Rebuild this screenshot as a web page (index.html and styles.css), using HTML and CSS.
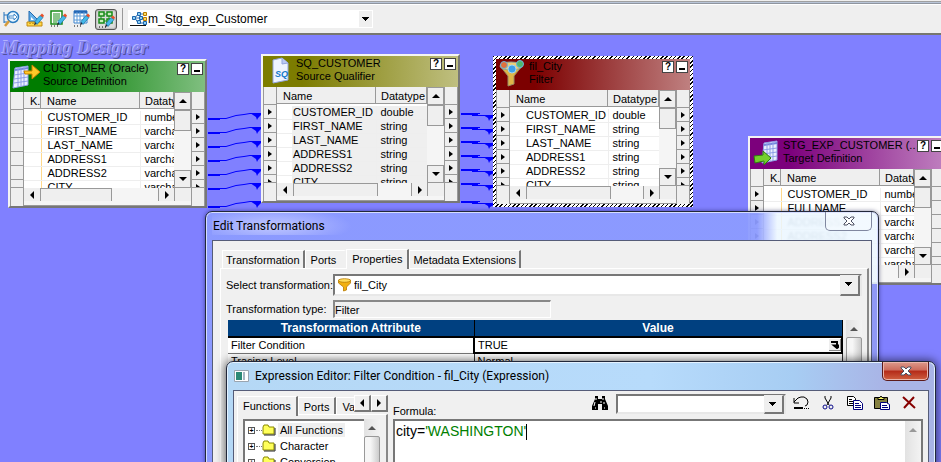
FILE: index.html
```html
<!DOCTYPE html>
<html lang="en">
<head>
<meta charset="utf-8">
<title>Mapping Designer</title>
<link rel="stylesheet" href="styles.css">
</head>
<body>
<svg class="defs" aria-hidden="true">
  <symbol id="pencil" viewBox="0 0 10 12"><path d="M0 12l1-4 2 2z" fill="#223"/><path d="M1 8l5-6 3 2-6 7z" fill="#45b8e8" stroke="#1673a8" stroke-width=".7"/><path d="M6 2l2-2 2 2-1 2z" fill="#e8502a"/></symbol>
  <symbol id="grid" viewBox="0 0 18 24"><path d="M3 3l13-2v19L1 23z" fill="#e9efff" stroke="#8d9ee6"/><path d="M3 5l13-2" stroke="#7385dd" stroke-width="2"/><path d="M2 10l14-2M2 14l14-2M2 18l14-2M6 3v19M9 3v18M12 2v19" stroke="#8d9ee6" fill="none"/></symbol>
  <symbol id="close" viewBox="0 0 12 10"><path d="M1 1h3l2 2 2-2h3v1L8 5l3 3v1H8L6 7 4 9H1V8l3-3-3-3z" fill="#fff" stroke="#4c5062"/></symbol>
  <symbol id="funnel" viewBox="0 0 14 14"><path d="M1 2v3l5 4v4l3-1V9l4-4V2z" fill="#f2b111" stroke="#b87a00" stroke-width=".8"/><ellipse cx="7" cy="2.5" rx="6" ry="1.8" fill="#ffdd5c" stroke="#b87a00" stroke-width=".8"/></symbol>
  <symbol id="folder" viewBox="0 0 14 12"><path d="M1 3l1-2h4l1 2h5v7H1z" fill="#ffff5a" stroke="#8a8a00"/><path d="M2 11h11V4" stroke="#222" fill="none"/></symbol>
</svg>

<header class="topbar">
  <div class="edge"></div>
  <div class="toolbar">
    <button class="tool" aria-label="Source Analyzer"><svg width="18" height="18" viewBox="0 0 18 18"><path d="M1 2v11M1 5h4M1 12h3" stroke="#2273bd" fill="none"/><circle cx="10" cy="7" r="5.5" fill="#e8f6ff" stroke="#2b7cc0" stroke-width="1.5"/><path d="M6 6h5V4l3 3-3 3V8H6z" fill="#fff" stroke="#2273bd" stroke-width=".8"/><path d="M6 11l-4 5" stroke="#d59b3a" stroke-width="2.5"/></svg></button>
    <button class="tool" aria-label="Target Designer"><svg width="18" height="18" viewBox="0 0 18 18"><path d="M3 1v11h11z" fill="#62aee8" stroke="#2069ae"/><path d="M5 7v3h3z" fill="#fff"/><path d="M1 12h15v4H1z" fill="#ffd849" stroke="#c28a10"/><path d="M4 13v1M7 13v1M10 13v1" stroke="#9a6b00"/><use href="#pencil" x="8" y="3" width="10" height="13"/></svg></button>
    <button class="tool" aria-label="Transformation Developer"><svg width="18" height="18" viewBox="0 0 18 18"><path d="M2 1h11v13H2z" fill="#fff" stroke="#178a17" stroke-width="1.5"/><path d="M4 4h7M4 6h7M4 8h7M4 10h6M4 12h4" stroke="#178a17"/><path d="M2 16h1M5 16h1M8 16h1" stroke="#000"/><use href="#pencil" x="8" y="3" width="10" height="13"/></svg></button>
    <button class="tool" aria-label="Mapplet Designer"><svg width="18" height="18" viewBox="0 0 18 18"><path d="M2 1h13v12H2z" fill="#fff" stroke="#3d83ce"/><path d="M2 2h13" stroke="#2467b5" stroke-width="3"/><path d="M2 6h13M2 10h13M5 2v11M8 2v11M12 2v11" stroke="#5b9ad8" fill="none"/><path d="M2 16h1M5 16h1M8 16h1" stroke="#000"/><use href="#pencil" x="8" y="3" width="10" height="13"/></svg></button>
    <button class="tool pressed" aria-label="Mapping Designer"><svg width="18" height="18" viewBox="0 0 18 18"><path d="M5 3h8M5 10h8M4 3v8M12 3v8" stroke="#178a17"/><path d="M2 1h5v4H2zM10 1h5v4h-5zM2 8h5v4H2zM10 8h5v4h-5z" fill="#c9f0bd" stroke="#178a17" stroke-width="1.5"/><path d="M2 16h1M5 16h1M8 16h1" stroke="#000"/><use href="#pencil" x="8" y="4" width="10" height="13"/></svg></button>
    <span class="rule"></span>
    <label class="picker"><svg width="18" height="16" viewBox="0 0 18 16"><path d="M0 14.500h16" stroke="#111"/><path d="M4 7h9M8 3l-3 4 3 5M8 3h7M8 12h7" stroke="#2a6fb0" fill="none"/><g fill="#8fd0f5" stroke="#1d66ae"><path d="M2.500 5.500h3v3h-3zM7.500 1.500h3v3h-3zM7.500 9.500h3v3h-3zM9.500 5.500h3v3h-3zM13.500 10.500h3v3h-3z"/></g><path d="M13.500 1.500h3v3h-3zM13.500 6.500h3v3h-3z" fill="#ffdb5b" stroke="#b87a00"/></svg><select aria-label="Mapping"><option>m_Stg_exp_Customer</option></select></label>
  </div>
</header>

<main class="canvas">
  <h1 class="watermark">Mapping Designer</h1>

  <svg class="links" width="700" height="180" viewBox="0 35 700 180" aria-hidden="true">
    <defs>
      <g id="la"><path d="M208 118.500h18l10-3 8-1 6-1h12" fill="none" stroke="#00f"/><path d="M208 119h12" stroke="#00f" stroke-width="2"/><path d="M250 113h11v2l-3 3-1 2-1-3z" fill="#00f"/></g>
      <g id="lb"><path d="M461 114h17" stroke="#00f" stroke-width="2"/><path d="M472 115.500h22M474 113.500h6" stroke="#00f" fill="none"/><path d="M483 115h11v2l-4 2-1 2-1-3z" fill="#00f"/></g>
    </defs>
    <use href="#la"/><use href="#la" y="14"/><use href="#la" y="28"/><use href="#la" y="42"/><use href="#la" y="56"/><use href="#la" y="70"/><use href="#la" y="88"/>
    <use href="#lb"/><use href="#lb" y="14"/><use href="#lb" y="28"/><use href="#lb" y="42"/><use href="#lb" y="56"/><use href="#lb" y="70"/><use href="#lb" y="88"/>
  </svg>

  <section class="node source keyed">
    <header class="bar"><svg width="29" height="27" viewBox="0 0 29 27"><use href="#grid" x="0" y="3" width="18" height="24"/><path d="M12 9h8V3l8 7-8 7v-5h-7z" fill="#ffc928" stroke="#c98200"/></svg><h2>CUSTOMER (Oracle)<br>Source Definition</h2><button>?</button><button class="min" aria-label="Minimize"></button></header>
    <div class="body">
      <div class="ports"><i></i><i></i><i></i><i></i><i></i><i></i><i></i><i></i></div>
      <div class="view"><table><thead><tr><th>K.</th><th>Name</th><th>Datatype</th></tr></thead><tbody><tr><td></td><td>CUSTOMER_ID</td><td>number</td></tr><tr><td></td><td>FIRST_NAME</td><td>varchar2</td></tr><tr><td></td><td>LAST_NAME</td><td>varchar2</td></tr><tr><td></td><td>ADDRESS1</td><td>varchar2</td></tr><tr><td></td><td>ADDRESS2</td><td>varchar2</td></tr><tr><td></td><td>CITY</td><td>varchar2</td></tr></tbody></table></div>
      <div class="vbar"><span class="up"></span><span class="thumb"></span><span class="down"></span></div>
      <div class="ports on"><i></i><i></i><i></i><i></i><i></i><i></i><i></i><i></i></div>
      <div class="hbar"><span class="left"></span><span class="thumb"></span><span class="right"></span><span class="corner"></span></div>
    </div>
  </section>

  <section class="node qualifier">
    <header class="bar"><svg width="29" height="27" viewBox="0 0 29 27"><path d="M8 3l9-2 6 5v17L8 26z" fill="#eef4ff" stroke="#93a5dd"/><path d="M17 1v6l6-1" fill="#b9c8f5" stroke="#93a5dd"/><text x="10" y="20" class="sq">SQ</text></svg><h2>SQ_CUSTOMER<br>Source Qualifier</h2><button>?</button><button class="min" aria-label="Minimize"></button></header>
    <div class="body">
      <div class="ports on"><i></i><i></i><i></i><i></i><i></i><i></i><i></i><i></i></div>
      <div class="view"><table><thead><tr><th>Name</th><th>Datatype</th></tr></thead><tbody><tr><td>CUSTOMER_ID</td><td>double</td></tr><tr><td>FIRST_NAME</td><td>string</td></tr><tr><td>LAST_NAME</td><td>string</td></tr><tr><td>ADDRESS1</td><td>string</td></tr><tr><td>ADDRESS2</td><td>string</td></tr><tr><td>CITY</td><td>string</td></tr></tbody></table></div>
      <div class="vbar"><span class="up"></span><span class="thumb"></span><span class="down"></span></div>
      <div class="ports on"><i></i><i></i><i></i><i></i><i></i><i></i><i></i><i></i></div>
      <div class="hbar"><span class="left"></span><span class="thumb"></span><span class="right"></span><span class="corner"></span></div>
    </div>
  </section>

  <section class="node filter">
    <header class="bar"><svg width="29" height="27" viewBox="0 0 29 27"><path d="M2 6l8 10v10l6-2v-8l8-10z" fill="#dfb548" stroke="#998a62"/><ellipse cx="13" cy="6" rx="11" ry="4" fill="#efcf75" stroke="#8aa39b"/><circle cx="6" cy="5" r="3.500" fill="#e0703c" stroke="#6bb5dd"/><circle cx="22" cy="4" r="3.500" fill="#4fb76b" stroke="#6bb5dd"/><circle cx="14" cy="9" r="4" fill="#3f9fe8" stroke="#9fd4f4"/></svg><h2>fil_City<br>Filter</h2><button>?</button><button class="min" aria-label="Minimize"></button></header>
    <div class="body">
      <div class="ports on"><i></i><i></i><i></i><i></i><i></i><i></i><i></i><i></i></div>
      <div class="view"><table><thead><tr><th>Name</th><th>Datatype</th></tr></thead><tbody><tr><td>CUSTOMER_ID</td><td>double</td></tr><tr><td>FIRST_NAME</td><td>string</td></tr><tr><td>LAST_NAME</td><td>string</td></tr><tr><td>ADDRESS1</td><td>string</td></tr><tr><td>ADDRESS2</td><td>string</td></tr><tr><td>CITY</td><td>string</td></tr></tbody></table></div>
      <div class="vbar"><span class="up"></span><span class="thumb"></span><span class="down"></span></div>
      <div class="ports on"><i></i><i></i><i></i><i></i><i></i><i></i><i></i><i></i></div>
      <div class="hbar"><span class="left"></span><span class="thumb"></span><span class="right"></span><span class="corner"></span></div>
    </div>
  </section>

  <section class="node target keyed">
    <header class="bar"><svg width="29" height="27" viewBox="0 0 29 27"><use href="#grid" x="9" y="1" width="18" height="24"/><path d="M2 17l9-1v-4l8 7-7 7v-4l-9 2z" fill="#74cf2c" stroke="#2f7d10"/></svg><h2>STG_EXP_CUSTOMER (...<br>Target Definition</h2><button>?</button><button class="min" aria-label="Minimize"></button></header>
    <div class="body">
      <div class="ports on"><i></i><i></i><i></i><i></i><i></i><i></i><i></i><i></i></div>
      <div class="view"><table><thead><tr><th>K.</th><th>Name</th><th>Datatype</th></tr></thead><tbody><tr><td></td><td>CUSTOMER_ID</td><td>number</td></tr><tr><td></td><td>FULLNAME</td><td>varchar2</td></tr><tr><td></td><td class="veiled">ADDRESS1</td><td>varchar2</td></tr><tr><td></td><td class="veiled">ADDRESS2</td><td>varchar2</td></tr><tr><td></td><td>CITY</td><td>varchar2</td></tr><tr><td></td><td>STATE</td><td>varchar2</td></tr></tbody></table></div>
      <div class="vbar"><span class="up"></span><span class="thumb"></span><span class="down"></span></div>
      <div class="ports"><i></i><i></i><i></i><i></i><i></i><i></i><i></i><i></i></div>
      <div class="hbar"><span class="left"></span><span class="thumb"></span><span class="right"></span><span class="corner"></span></div>
    </div>
  </section>

  <section class="window edit">
    <header class="caption"><h2>Edit Transformations</h2><button class="x" aria-label="Close"><svg width="12" height="10"><use href="#close"/></svg></button></header>
    <div class="client">
      <nav class="tabs"><button>Transformation</button><button>Ports</button><button class="active">Properties</button><button>Metadata Extensions</button></nav>
      <div class="sheet">
        <div class="field"><label for="tr">Select transformation:</label><div class="combo"><svg width="15" height="14"><use href="#funnel"/></svg><select id="tr"><option>fil_City</option></select></div></div>
        <div class="field type"><label for="ty">Transformation type:</label><input id="ty" value="Filter" readonly></div>
        <div class="listing">
          <table><thead><tr><th>Transformation Attribute</th><th>Value</th></tr></thead><tbody><tr class="current"><td>Filter Condition</td><td><div class="cell">TRUE<button aria-label="Open editor"><svg width="8" height="8" viewBox="0 0 8 8"><path d="M0 1h6v4M3 4.500h6L6 7z" fill="none" stroke="#000" stroke-width="2"/></svg></button></div></td></tr><tr><td>Tracing Level</td><td>Normal</td></tr></tbody></table>
          <div class="scroll"><span></span></div>
        </div>
      </div>
    </div>
  </section>

  <section class="window expr">
    <header class="caption"><svg width="15" height="12" viewBox="0 0 15 12"><path d="M.5.500h14v11H.5z" fill="#fff" stroke="#9aa5b0"/><path d="M2 2h6v8H2z" fill="#2d8a76"/><path d="M9 2h2v8H9z" fill="#a8b6c2"/></svg><h2>Expression Editor: Filter Condition - fil_City (Expression)</h2><button class="x red" aria-label="Close"><svg width="12" height="10"><use href="#close"/></svg></button></header>
    <div class="client split">
      <div class="side">
        <nav class="tabs"><button class="active">Functions</button><button>Ports</button><button class="cut">Variables</button><button class="step prev" aria-label="Previous tab"></button><button class="step next" aria-label="Next tab"></button></nav>
        <div class="pane">
          <ul class="tree"><li class="picked"><b>+</b><svg width="14" height="12"><use href="#folder"/></svg><span>All Functions</span></li><li><b>+</b><svg width="14" height="12"><use href="#folder"/></svg><span>Character</span></li><li><b>+</b><svg width="14" height="12"><use href="#folder"/></svg><span>Conversion</span></li></ul>
          <div class="scroll"><span></span></div>
        </div>
      </div>
      <div class="work">
        <div class="actions">
          <label for="formula">Formula:</label>
          <svg width="16" height="14" viewBox="0 0 16 14"><path d="M3 0h3v3h4V0h3v3l3 7v4h-6V8H6v6H0v-4l3-7z"/><path d="M4 2v2M11 2v2M3 6l-1 4M9 5v2M12 6v2M3 12h1M12 12h1" stroke="#fff"/></svg>
          <div class="combo"><select aria-label="Find"><option></option></select></div>
          <button aria-label="Undo"><svg width="16" height="14" viewBox="0 0 16 14"><path d="M1 2v5h5M1 6l4-4 3-1h3l3 2 1 3-1 3-2 1" stroke="#000" fill="none"/><path d="M1 12h9" stroke="#000" stroke-width="2"/><path d="M11 12.500h1M13 12.500h1M15 12.500h1" stroke="#000"/></svg></button>
          <button aria-label="Cut"><svg width="16" height="14" viewBox="0 0 16 14"><path d="M5 0v2l4 7M11 0v2L7 9" stroke="#000" fill="none"/><circle cx="5" cy="11" r="2" fill="none" stroke="#0a0a8a"/><circle cx="11" cy="11" r="2" fill="none" stroke="#0a0a8a"/></svg></button>
          <button aria-label="Copy"><svg width="16" height="14" viewBox="0 0 16 14"><path d="M.5.500h6l2 2v7h-8z" fill="#fff" stroke="#000"/><path d="M2 3.500h3M2 5.500h4M2 7.500h4" stroke="#000"/><path d="M6.500 4.500h6l3 3v6h-9z" fill="#fff" stroke="#00007c"/><path d="M8 7.500h4M8 9.500h6M8 11.500h6" stroke="#00007c"/></svg></button>
          <button aria-label="Paste"><svg width="16" height="14" viewBox="0 0 16 14"><path d="M.5 1.500h13v11H.5z" fill="#858040" stroke="#000"/><path d="M4 3.500V1.500h2l1-1.500 1 1.500h2v2z" fill="#ff6" stroke="#000"/><path d="M6.500 6.500h6l3 2v5h-9z" fill="#fff" stroke="#00007c"/><path d="M8 9.500h5M8 11.500h6" stroke="#00007c"/></svg></button>
          <button aria-label="Delete"><svg width="16" height="14" viewBox="0 0 16 14"><path d="M2 1l12 11M13 1L3 12" stroke="#860000" stroke-width="2"/></svg></button>
        </div>
        <div class="editor"><div id="formula" class="code" role="textbox" contenteditable="true" aria-label="Formula">city=<em>'WASHINGTON'</em><span class="caret"></span></div><div class="scroll dim"></div></div>
      </div>
    </div>
  </section>
</main>
</body>
</html>
```
FILE: styles.css
```css
* { box-sizing: border-box; }
body { margin: 0; height: 100vh; display: flex; flex-direction: column; overflow: hidden; font: 11px/14px "Liberation Sans", Arial, sans-serif; color: #000; background: #8080ff; }
h1, h2, ul { margin: 0; padding: 0; font: inherit; list-style: none; }
button, select, input { font: inherit; color: inherit; margin: 0; padding: 0; border: 0; border-radius: 0; background: none; }
select { appearance: none; outline: 0; }
svg { display: block; flex: none; }
table { border-collapse: collapse; table-layout: fixed; width: 100%; }
th, td { padding: 0; font-weight: normal; text-align: left; white-space: nowrap; overflow: hidden; }
.defs { position: absolute; width: 0; height: 0; }

/* Toolbar */
.topbar { flex: none; background: #efefef; border-bottom: 2px solid #77776f; }
.edge { height: 5px; border-bottom: 1px solid #fff; background: linear-gradient(#efefef 1px, #a0a0a0 1px 2px, #b9c5d8 2px 3px, #8f959f 3px); }
.toolbar { display: flex; align-items: center; height: 28px; padding-left: 3px; gap: 5px; }
.tool { width: 18px; height: 18px; }
.pressed { width: 22px; height: 21px; padding: 1px; border: 1px solid #555; border-radius: 3px; background: #ddd; box-shadow: inset 0 0 2px #777; }
.rule { width: 1px; height: 22px; background: #999; }
.picker { display: flex; align-items: center; width: 245px; height: 18px; padding-left: 2px; background: #fff; }
.picker select { flex: 1; height: 18px; font: 12px "Liberation Sans", Arial, sans-serif; }
.picker::after { content: ""; width: 13px; height: 16px; margin-right: 1px; background: linear-gradient(#000, #000) 3px 6px / 7px 1px no-repeat, linear-gradient(#000, #000) 4px 7px / 5px 1px no-repeat, linear-gradient(#000, #000) 5px 8px / 3px 1px no-repeat, linear-gradient(#000, #000) 6px 9px / 1px 1px no-repeat, #efefef; }

/* Canvas and nodes */
.canvas { position: relative; flex: 1; min-height: 0; overflow: hidden; background: #8080ff; }
.watermark { padding: 3px 2px; font: italic 19px/20px "Liberation Serif", serif; font-weight: bold; color: #8383f0; text-shadow: -1px -1px #b3b3ff, 1px 1px #50509c; }
.links { position: absolute; left: 0; top: 0; }
.node { position: absolute; width: 199px; border: 2px solid #f4f4f4; border-right-color: #777; border-bottom-color: #777; background: #efefef; }
.source { left: 8px; top: 24px; --tone: #007c00; --fade: #80bf80; }
.qualifier { left: 261px; top: 19px; --tone: #7c7c00; --fade: #bfbf80; }
.filter { left: 493px; top: 21px; width: 200px; --tone: #7c0000; --fade: #bf8080; border: 3px solid; border-image: repeating-linear-gradient(135deg, #000 0 1px, #fff 1px 3px) 3; }
.target { left: 748px; top: 101px; --tone: #7c007c; --fade: #bf80bf; }
.bar { display: flex; height: 31px; padding: 1px 2px; gap: 1px; background: linear-gradient(90deg, var(--tone) 20%, var(--fade)); }
.bar h2 { flex: 1; min-width: 0; padding-left: 1px; line-height: 13px; white-space: nowrap; overflow: hidden; }
.bar button { flex: none; width: 12px; height: 12px; margin-top: 1px; border: 1px solid #444; background: #fff; font-weight: bold; font-size: 10px; line-height: 10px; text-align: center; }
.bar .min { margin-left: 1px; background: linear-gradient(#000, #000) 2px 6px / 6px 2px no-repeat, #fff; }
.sq { font: italic bold 9px "Liberation Sans", sans-serif; fill: #1478c8; }
.body { display: grid; grid-template: 96px 18px / 14px minmax(0, 1fr) 17px 14px; }
.ports { grid-row: 1 / 3; display: flex; flex-direction: column; border: 1px solid #999; border-width: 0 1px; }
.ports i { height: 14px; border-bottom: 1px solid #999; }
.ports i:first-child { height: 18px; }
.ports i:nth-child(7) { height: 8px; }
.ports i:last-child { flex: 1; border: 0; }
.ports.on i:not(:first-child):not(:last-child)::before { content: ""; display: block; width: 0; border: solid transparent; border-width: 3px 0 3px 4px; border-left-color: #000; transform: translate(4px, 4px); }
.ports.on i:nth-child(7) { overflow: hidden; }
.view { overflow: hidden; background: #fff; }
.view th { height: 18px; padding-left: 6px; border-bottom: 2px solid #fff; background: #efefef; box-shadow: inset -1px -1px #999; }
.view td { height: 14px; padding-left: 5px; border-bottom: 1px solid #eee; line-height: 13px; }
.view th:last-child { width: 51px; padding-left: 5px; }
.view td:last-child { border-left: 1px solid #eee; padding-left: 4px; }
.view td:first-child { padding-left: 16px; }
.keyed th:first-child { width: 17px; }
.keyed th:last-child { width: 34px; }
.view .veiled { filter: blur(1px); color: #789; }
.keyed td:nth-child(2) { padding-left: 6px; border-left: 1px solid #ffd98c; }
.qualifier .view td { background: #efefef; }
.qualifier .view td:first-child { background: linear-gradient(90deg, #fff 15px, #efefef 15px); }
.vbar { display: flex; flex-direction: column; background: #f5f5f5; }
.vbar span, .hbar span { display: grid; place-items: center; border: 1px solid #999; background: #efefef; }
.vbar .up, .vbar .down { height: 18px; }
.vbar .thumb { height: 21px; margin-bottom: auto; }
.hbar { grid-area: 2 / 2 / 3 / 4; display: flex; padding-bottom: 4px; background: #f5f5f5; border-bottom: 1px solid #999; }
.hbar .left, .hbar .right { width: 17px; border-width: 0 1px 0 0; }
.hbar .right { border-left-width: 1px; }
.hbar .thumb { flex: none; width: 71px; margin-right: auto; border-width: 1px 1px 0 0; }
.hbar .corner { width: 16px; border: 0; }
.up::before { content: ""; border: solid transparent; border-width: 0 4px 4px; border-bottom-color: #000; }
.down::before { content: ""; border: solid transparent; border-width: 4px 4px 0; border-top-color: #000; }
.left::before, .prev::before { content: ""; border: solid transparent; border-width: 4px 4px 4px 0; border-right-color: #000; }
.right::before, .next::before { content: ""; border: solid transparent; border-width: 4px 0 4px 4px; border-left-color: #000; }
.qualifier .hbar .thumb, .filter .hbar .thumb { width: 84px; }

/* Windows */
.window { position: absolute; bottom: -6px; display: flex; flex-direction: column; padding: 0 6px; border: 1px solid #22283a; border-radius: 7px 7px 0 0; }
.edit { left: 205px; top: 176px; width: 674px; background: linear-gradient(90deg, rgba(140, 155, 255, .95) 82%, rgba(235, 246, 255, .85) 85%); box-shadow: inset 0 0 0 1px #d5dcff, 0 0 4px rgba(0, 0, 60, .5); }
.edit::after { content: ""; position: absolute; right: 1px; top: 72px; bottom: 0; width: 5px; background: #8f98f5; }
.expr { left: 226px; top: 326px; width: 710px; background: linear-gradient(90deg, #b5d8f5, #b7dbfb 60%, #a7cdf3 80%, #a9b4e6 93%); box-shadow: inset 0 0 0 1px #e4f2ff, 0 0 10px 1px rgba(0, 0, 0, .6); }
.caption { display: flex; align-items: flex-start; height: 28px; flex: none; }
.caption h2 { flex: 1; padding: 5px 0 0 1px; font: 12px/18px Roboto, "Noto Sans", sans-serif; }
.edit .caption h2 { background: radial-gradient(ellipse 80px 18px at 60px 14px, rgba(255, 255, 255, .45), transparent); }
.caption > svg { margin: 8px 5px 0 1px; }
.x { display: grid; place-items: center; width: 47px; height: 19px; border: 1px solid #8087a0; border-top: 0; border-radius: 0 0 5px 5px; background: rgba(255, 255, 255, .3); }
.red { border-color: #5c1a1a; background: linear-gradient(#dc9a8c, #cc6b5b 45%, #b42a18 50%, #cf6040); box-shadow: inset 0 0 0 1px #eab5aa; }
.client { flex: 1; min-height: 0; border: 1px solid #555c78; border-bottom: 0; background: #f0f0f0; }
.edit .client { padding: 7px 2px 0 7px; display: flex; flex-direction: column; }
.tabs { display: flex; align-items: flex-end; flex: none; height: 20px; }
.tabs button { height: 18px; padding: 0 5px; border: 1px solid #fff; border-right: 2px solid #777; border-bottom: 0; }
.tabs .active { height: 20px; margin-bottom: -1px; padding: 0 5px 2px; background: #f0f0f0; z-index: 1; }
.edit .tabs { padding-left: 2px; }
.edit .tabs button { padding-left: 3px; padding-right: 3px; }
.edit .tabs button:nth-child(2) { border-right-color: #f0f0f0; padding: 0 8px 0 5px; }
.edit .tabs .active { padding: 0 5px 2px; }
.sheet { flex: 1; padding: 5px 5px 0; border: 1px solid #fff; border-right: 2px solid #888; }
.field { display: grid; grid-template-columns: 107px minmax(0, 1fr); align-items: center; padding-bottom: 4px; white-space: nowrap; }
.type { grid-template-columns: 107px 218px; padding-bottom: 2px; }
.combo { display: flex; align-items: center; height: 22px; padding-left: 2px; border: 2px solid #777; border-right-color: #e8e8e8; border-bottom-color: #e8e8e8; background: #fff; }
.combo select { flex: 1; height: 18px; padding-left: 2px; }
.combo::after { content: ""; width: 17px; height: 18px; border: 1px solid #eee; border-right: 2px solid #777; border-bottom: 2px solid #777; background: linear-gradient(#000, #000) 4px 6px / 7px 1px no-repeat, linear-gradient(#000, #000) 5px 7px / 5px 1px no-repeat, linear-gradient(#000, #000) 6px 8px / 3px 1px no-repeat, linear-gradient(#000, #000) 7px 9px / 1px 1px no-repeat, #efefef; }
.type input { height: 18px; border: 1px solid #fff; border-top: 2px solid #888; border-left: 2px solid #888; }
.listing { display: flex; align-items: flex-start; gap: 3px; padding-left: 2px; }
.listing table { flex: 1; min-width: 0; }
.listing th { height: 17px; border: 1px solid #000; border-width: 0 1px 2px 0; background: #004080; color: #fff; font: bold 12px/15px "Liberation Sans", Arial, sans-serif; text-align: center; }
.listing th:first-child { width: 246px; }
.listing td { height: 16px; padding-left: 3px; border-right: 1px solid #333; border-bottom: 1px solid #777; background: #fff; }
.listing .current td:last-child { border: 1px solid #000; border-width: 1px 2px 2px; }
.cell { display: flex; justify-content: space-between; align-items: center; height: 14px; }
.cell button { width: 12px; height: 12px; display: grid; place-items: center; background: #eee; border: 1px solid #888; border-top: 0; border-left: 0; }
.scroll { flex: none; width: 16px; background: linear-gradient(90deg, #e2e2e2, #f3f3f3); }
.scroll::before { content: ""; display: block; width: 0; margin: 7px auto 6px; border: solid transparent; border-width: 0 4px 4px; border-bottom-color: #555; }
.scroll span { display: block; height: 50px; border: 1px solid #999; border-radius: 2px; background: linear-gradient(90deg, #f6f6f6 40%, #ccc); }
.dim::before { border-bottom-color: #999; }

/* Expression editor */
.split { display: flex; padding: 4px 5px 0 3px; gap: 5px; }
.side { width: 151px; flex: none; display: flex; flex-direction: column; }
.side .tabs .cut { flex: 1; min-width: 0; overflow: hidden; text-align: left; border-right: 0; }
.tabs .step { display: grid; place-items: center; flex: none; width: 17px; height: 17px; padding: 0; margin-bottom: 3px; border: 1px solid #fff; border-right: 2px solid #777; border-bottom: 2px solid #777; }
.pane { flex: 1; min-height: 0; display: flex; margin-top: -1px; padding: 4px 6px 0 5px; border: 1px solid #fff; border-right: 2px solid #888; }
.tree { flex: 1; padding: 1px 0 0 3px; border: 2px solid #777; border-width: 2px 0 0 2px; background: #fff; }
.tree li { display: flex; align-items: center; height: 16px; }
.tree b { width: 7px; height: 7px; border: 1px solid #555; font: bold 7px/5px "Liberation Sans", sans-serif; text-align: center; }
.tree b::after { content: ""; display: block; width: 6px; margin: -3px 0 0 7px; border-top: 1px dotted #777; }
.tree svg { margin: 0 2px 0 7px; }
.tree span { padding: 0 2px; }
.picked span { background: #efefef; }
.work { flex: 1; min-width: 0; display: flex; flex-direction: column; }
.actions { display: flex; align-items: flex-start; flex: none; height: 24px; padding: 0 6px 0 0; gap: 11px; }
.actions label { flex: 1; padding-top: 9px; }
.actions > svg, .actions > button { margin-top: 1px; }
.actions .combo { width: 170px; height: 20px; margin: -1px -4px 0 -3px; }
.actions .combo::after { height: 16px; }
.editor { flex: 1; min-height: 0; display: flex; border: 2px solid #777; border-bottom: 0; background: #fff; }
.code { flex: 1; padding: 1px; font: 14px/18px "Liberation Sans", Arial, sans-serif; outline: 0; }
.code em { font-style: normal; color: #008000; }
.caret { display: inline-block; width: 1px; height: 16px; background: #000; vertical-align: middle; }
```
